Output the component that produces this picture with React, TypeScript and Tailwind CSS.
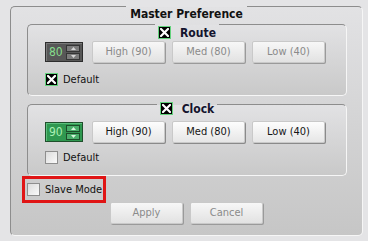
import React from "react";

const FONT = { fontFamily: '"DejaVu Sans Condensed", "DejaVu Sans", "Liberation Sans", sans-serif' };

function Check({ checked }: { checked: boolean }) {
  return checked ? (
    <span className="inline-flex w-[13px] h-[13px] shrink-0 items-center justify-center border border-[#63d27c] bg-black">
      <svg width="9" height="9" viewBox="0 0 9 9">
        <path d="M1 1L8 8M8 1L1 8" stroke="white" strokeWidth="2.2" strokeLinecap="square" />
      </svg>
    </span>
  ) : (
    <span className="inline-block w-[13px] h-[13px] shrink-0 border border-[#8e8e8e] bg-gradient-to-br from-[#dcdcdc] to-[#fafafa]" />
  );
}

function Btn({ label, disabled }: { label: string; disabled?: boolean }) {
  return (
    <div
      className={
        disabled
          ? "w-[73px] h-[22px] flex items-center justify-center rounded-[2px] border border-[#c9c9c9] shadow-[1px_1px_0_#9a9a9a] bg-gradient-to-b from-[#f7f7f7] to-[#e2e2e2] text-[11px] text-[#8a8a8a]"
          : "w-[73px] h-[22px] flex items-center justify-center rounded-[2px] border border-[#c9c9c9] shadow-[1px_1px_0_#8a8a8a] bg-gradient-to-b from-[#fdfdfd] to-[#e6e6e6] text-[11px] text-[#151515]"
      }
    >
      {label}
    </div>
  );
}

function Arrow({ up, color }: { up: boolean; color: string }) {
  return (
    <svg width="5" height="3" viewBox="0 0 5 3">
      <path d={up ? "M0 3L2.5 0L5 3Z" : "M0 0L2.5 3L5 0Z"} fill={color} />
    </svg>
  );
}

function Spin({ value, green }: { value: string; green?: boolean }) {
  return (
    <div
      className={
        green
          ? "w-[38px] h-[20px] flex items-center border border-[#1f4f2c] bg-[#2f9850] pl-[3px] pr-[2px] shadow-[inset_1px_1px_0_#5cbf7c]"
          : "w-[38px] h-[20px] flex items-center border border-[#2d2d2d] bg-[#575757] pl-[3px] pr-[2px] shadow-[inset_1px_1px_0_#7a7a7a]"
      }
    >
      <span className={green ? "text-[12px] leading-none text-[#a9f0b4]" : "text-[12px] leading-none text-[#86dc8c]"}>{value}</span>
      <div className="ml-auto flex flex-col gap-[1px]">
        <div
          className={
            green
              ? "w-[14px] h-[7px] flex items-center justify-center border border-[#1d4d2a] bg-[#4aae6a]"
              : "w-[14px] h-[7px] flex items-center justify-center border border-[#353535] bg-[#7c7c7c]"
          }
        >
          <Arrow up color={green ? "#d8f5de" : "#d6d6d6"} />
        </div>
        <div
          className={
            green
              ? "w-[14px] h-[7px] flex items-center justify-center border border-[#1d4d2a] bg-[#4aae6a]"
              : "w-[14px] h-[7px] flex items-center justify-center border border-[#353535] bg-[#7c7c7c]"
          }
        >
          <Arrow up={false} color={green ? "#d8f5de" : "#d6d6d6"} />
        </div>
      </div>
    </div>
  );
}

function Section({
  title,
  value,
  green,
  disabled,
  defaultChecked,
  shift,
}: {
  title: string;
  value: string;
  green?: boolean;
  disabled?: boolean;
  defaultChecked: boolean;
  shift: "a" | "b";
}) {
  return (
    <fieldset className="w-[320px] h-[78px] ml-[16px] rounded-[5px] border border-t-[#8d8d8d] border-l-[#8d8d8d] border-r-[#f6f6f6] border-b-[#f6f6f6] bg-gradient-to-b from-[#e2e2e4] to-[#c9c9c9]">
      <legend className="mx-auto px-[3px] h-[12px] leading-[12px]">
        <span
          className={
            shift === "a"
              ? "relative top-[8px] inline-flex items-center gap-[9px] align-top text-[12px] font-bold text-[#14142e]"
              : "relative top-[4px] inline-flex items-center gap-[9px] align-top text-[12px] font-bold text-[#14142e]"
          }
        >
          <Check checked />
          {title}
        </span>
      </legend>
      <div className="mt-[11px] pl-[17px] flex items-center">
        <Spin value={value} green={green} />
        <div className="ml-[9px] flex gap-[7px]">
          <Btn label="High (90)" disabled={disabled} />
          <Btn label="Med (80)" disabled={disabled} />
          <Btn label="Low (40)" disabled={disabled} />
        </div>
      </div>
      <div className={shift === "a" ? "mt-[10px] pl-[17px] flex items-center gap-[5px]" : "mt-[8px] pl-[17px] flex items-center gap-[5px]"}>
        <Check checked={defaultChecked} />
        <span className="text-[11px] leading-[13px] text-[#111]">Default</span>
      </div>
    </fieldset>
  );
}

export default function App() {
  return (
    <div className="w-[368px] h-[241px] bg-[#e4e4e6] pl-[10px] overflow-hidden" style={FONT}>
      <fieldset className="w-[353px] h-[236px] rounded-[5px] border border-t-[#8d8d8d] border-l-[#8d8d8d] border-r-[#f6f6f6] border-b-[#f6f6f6] bg-gradient-to-b from-[#e2e2e4] to-[#c6c6c6]">
        <legend className="mx-auto px-[4px] h-[12px] leading-[12px]">
          <span className="relative top-[7px] text-[12px] font-bold text-[#111]">Master Preference</span>
        </legend>
        <div className="mt-[6px]">
          <Section title="Route" value="80" disabled defaultChecked shift="a" />
        </div>
        <div className="mt-[2px]">
          <Section title="Clock" value="90" green defaultChecked={false} shift="b" />
        </div>
        <div className="ml-[11px] w-[84px] h-[27px] border-[3px] border-[#e01515] flex items-center pl-[2px] gap-[5px]">
          <Check checked={false} />
          <span className="text-[11px] leading-[13px] text-[#111]">Slave Mode</span>
        </div>
        <div className="mt-[-1px] flex justify-center gap-[7px]">
          <Btn label="Apply" disabled />
          <Btn label="Cancel" disabled />
        </div>
      </fieldset>
    </div>
  );
}
